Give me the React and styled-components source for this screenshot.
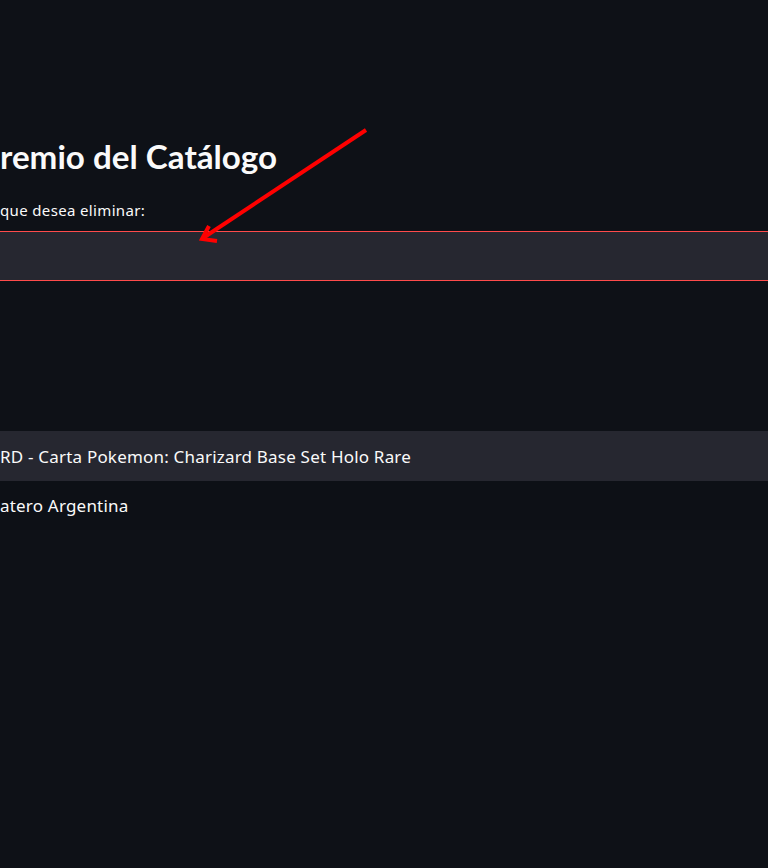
import React from "react";
import styled, { createGlobalStyle } from "styled-components";

const GlobalStyle = createGlobalStyle`
  html, body {
    margin: 0;
    padding: 0;
    background: #0e1117;
    overflow: hidden;
  }
  body {
    font-family: "Noto Sans", "Open Sans", sans-serif;
    color: #fafafa;
  }
`;

const Page = styled.div`
  position: relative;
  width: 768px;
  height: 868px;
  overflow: hidden;
  background: #0e1117;
`;

const Content = styled.main`
  display: flex;
  flex-direction: column;
  padding-top: 134px;
`;

const Title = styled.h2`
  margin: 0;
  font-family: Lato, "Noto Sans", sans-serif;
  font-size: 33.2px;
  font-weight: 700;
  line-height: 44px;
  color: #fafafa;
  white-space: nowrap;
`;

const Label = styled.label`
  margin-top: 22px;
  font-size: 15px;
  letter-spacing: 0.35px;
  line-height: 20px;
  color: #fafafa;
  white-space: nowrap;
`;

const SelectBox = styled.div`
  margin: 11px -20px 0;
  height: 48px;
  background: #262730;
  border-top: 1px solid #ff4b4b;
  border-bottom: 1px solid #ff4b4b;
`;

const Options = styled.ul`
  list-style: none;
  margin: 150px -20px 0;
  padding: 0;
  background: #0d1016;
`;

const Option = styled.li`
  height: ${(p) => (p.$last ? 49 : 50)}px;
  display: flex;
  align-items: center;
  padding-left: 20px;
  font-size: 17px;
  letter-spacing: 0.2px;
  color: #fafafa;
  white-space: nowrap;
  background: ${(p) => (p.$active ? "#262730" : "transparent")};
`;

const ArrowLayer = styled.svg`
  position: absolute;
  left: 0;
  top: 0;
  pointer-events: none;
`;

const options = [
  { label: "RD - Carta Pokemon: Charizard Base Set Holo Rare", active: true },
  { label: "atero Argentina", last: true },
];

export default function App() {
  return (
    <>
      <GlobalStyle />
      <Page>
        <Content>
          <Title>remio del Catálogo</Title>
          <Label>que desea eliminar:</Label>
          <SelectBox />
          <Options>
            {options.map((o) => (
              <Option key={o.label} $active={o.active} $last={o.last}>
                {o.label}
              </Option>
            ))}
          </Options>
        </Content>
        <ArrowLayer width="768" height="868" viewBox="0 0 768 868">
          <g stroke="#ff0000" strokeWidth="4" strokeLinecap="butt" fill="none">
            <line x1="366" y1="130" x2="203" y2="238" />
            <polyline points="209,226 202,239 217,241" />
          </g>
        </ArrowLayer>
      </Page>
    </>
  );
}
